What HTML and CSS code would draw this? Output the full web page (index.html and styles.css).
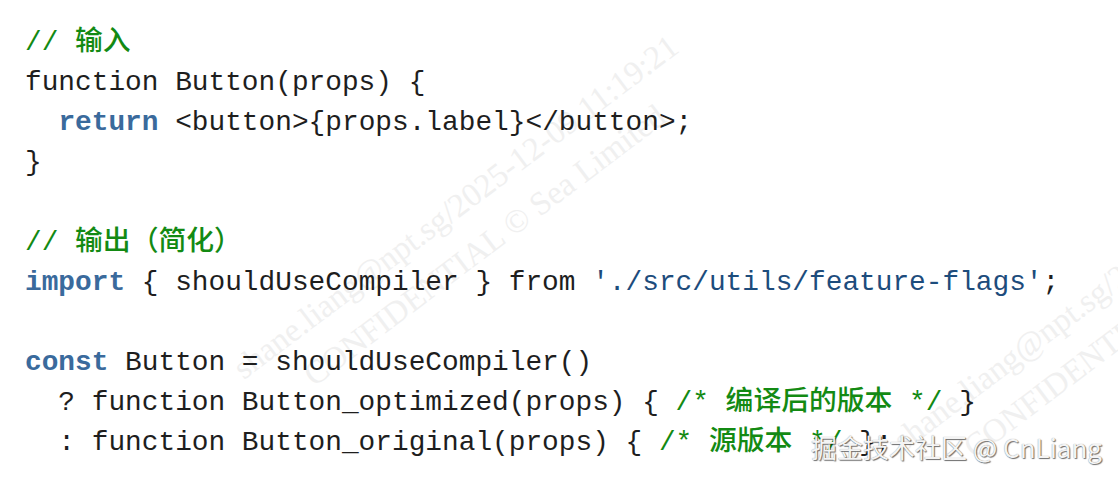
FILE: index.html
```html
<!DOCTYPE html>
<html lang="zh-CN">
<head>
<meta charset="utf-8">
<title>Code</title>
<link rel="stylesheet" href="styles.css">
</head>
<body>
<div class="page">
  <div class="watermark wm-a">
    <div>shane.liang@npt.sg/2025-12-09 11:19:21</div>
    <div>CONFIDENTIAL © Sea Limited</div>
  </div>
  <div class="watermark wm-b">
    <div>shane.liang@npt.sg/2025-12-09 11:19:21</div>
    <div>CONFIDENTIAL © Sea Limited</div>
  </div>
  <div class="code">
    <div class="line"><span class="c">// <span class="cjk">输入</span></span></div>
    <div class="line">function Button(props) {</div>
    <div class="line">  <span class="k">return</span> &lt;button&gt;{props.label}&lt;/button&gt;;</div>
    <div class="line">}</div>
    <div class="line"> </div>
    <div class="line"><span class="c">// <span class="cjk">输出（简化）</span></span></div>
    <div class="line"><span class="k">import</span> { shouldUseCompiler } from <span class="s">'./src/utils/feature-flags'</span>;</div>
    <div class="line"> </div>
    <div class="line"><span class="k">const</span> Button = shouldUseCompiler()</div>
    <div class="line">  ? function Button_optimized(props) { <span class="c">/* <span class="cjk">编译后的版本</span> */</span> }</div>
    <div class="line">  : function Button_original(props) { <span class="c">/* <span class="cjk">源版本</span> */</span> };</div>
  </div>
  <div class="brand">掘金技术社区 @ CnLiang</div>
</div>
</body>
</html>
```
FILE: styles.css
```css
html, body {
  margin: 0;
  padding: 0;
  background: #ffffff;
}

.page {
  position: relative;
  width: 1118px;
  height: 482px;
  overflow: hidden;
  background: #ffffff;
}

.code {
  position: relative;
  z-index: 1;
  padding: 23px 0 0 25px;
  font-family: "Courier New", "Nimbus Mono PS", "FreeMono", "Liberation Mono", "Noto Sans CJK SC", monospace;
  font-size: 27.8px;
  color: #1e1e1e;
}

.line {
  height: 40px;
  line-height: 40px;
  white-space: pre;
}

.cjk {
  font-family: "Noto Sans CJK SC", sans-serif;
  font-weight: 500;
  line-height: 30px;
}

.c {
  color: #138a13;
}

.k {
  color: #3a6a9c;
  font-weight: bold;
}

.s {
  color: #1d4c7c;
}

.watermark {
  position: absolute;
  z-index: 0;
  font-family: "Liberation Serif", serif;
  font-size: 33px;
  line-height: 48px;
  color: #f0f0f0;
  text-align: center;
  white-space: nowrap;
  transform: rotate(-37deg);
  transform-origin: center center;
  pointer-events: none;
}

.wm-a {
  left: 160px;
  top: 178px;
  width: 620px;
}

.wm-b {
  left: 820px;
  top: 250px;
  width: 620px;
}

.brand {
  position: absolute;
  z-index: 2;
  right: 16px;
  bottom: 22px;
  font-family: "Noto Sans CJK SC", "Noto Sans", sans-serif;
  font-size: 26px;
  line-height: 26px;
  color: #f4f4f4;
  text-shadow: 1px 1px 1px rgba(0, 0, 0, 0.55), 0 0 1px rgba(0, 0, 0, 0.45);
  white-space: nowrap;
}
```
